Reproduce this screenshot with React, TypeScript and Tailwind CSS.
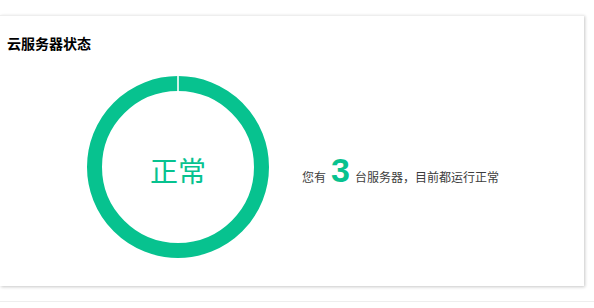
import React from 'react';

const GREEN = '#07c28f';

function StatusRing({ label }: { label: string }) {
  return (
    <div className="relative w-[182px] h-[182px] shrink-0">
      <svg width="182" height="182" viewBox="0 0 182 182" className="block">
        <circle cx="91" cy="91" r="83.5" fill="none" stroke={GREEN} strokeWidth="15" />
        <rect x="90.2" y="0" width="1.6" height="16" fill="#ffffff" />
      </svg>
      <div className="absolute inset-0 flex items-center justify-center pt-[6px]">
        <span className="text-[28px] leading-none text-[#07c28f]">{label}</span>
      </div>
    </div>
  );
}

export default function App() {
  const count = 3;
  return (
    <div
      className="w-[594px] h-[308px] bg-white overflow-hidden pt-[15px]"
      style={{ fontFamily: '"Noto Sans CJK SC", "Noto Sans", sans-serif' }}
    >
      <div className="w-[584px] h-[271px] bg-white border-t border-[#eeeeee] shadow-[1px_1px_3px_rgba(0,0,0,0.22)] flex flex-col">
        <h2 className="pl-[7px] pt-[17px] text-[14px] leading-[20px] font-bold text-black">
          云服务器状态
        </h2>
        <div className="flex items-center pl-[87px] pt-[23px]">
          <StatusRing label="正常" />
          <div className="ml-[33px] mt-[6px] flex items-baseline text-[12px] text-[#3d3d3d]">
            <span>您有</span>
            <span
              className="mx-[5px] text-[34px] leading-none font-bold text-[#07c28f]"
              style={{ fontFamily: '"Liberation Sans", Arial, sans-serif' }}
            >
              {count}
            </span>
            <span>台服务器，目前都运行正常</span>
          </div>
        </div>
      </div>
      <div className="mt-[15px] w-[594px] h-[20px] border-t border-[#eeeeee]" />
    </div>
  );
}
